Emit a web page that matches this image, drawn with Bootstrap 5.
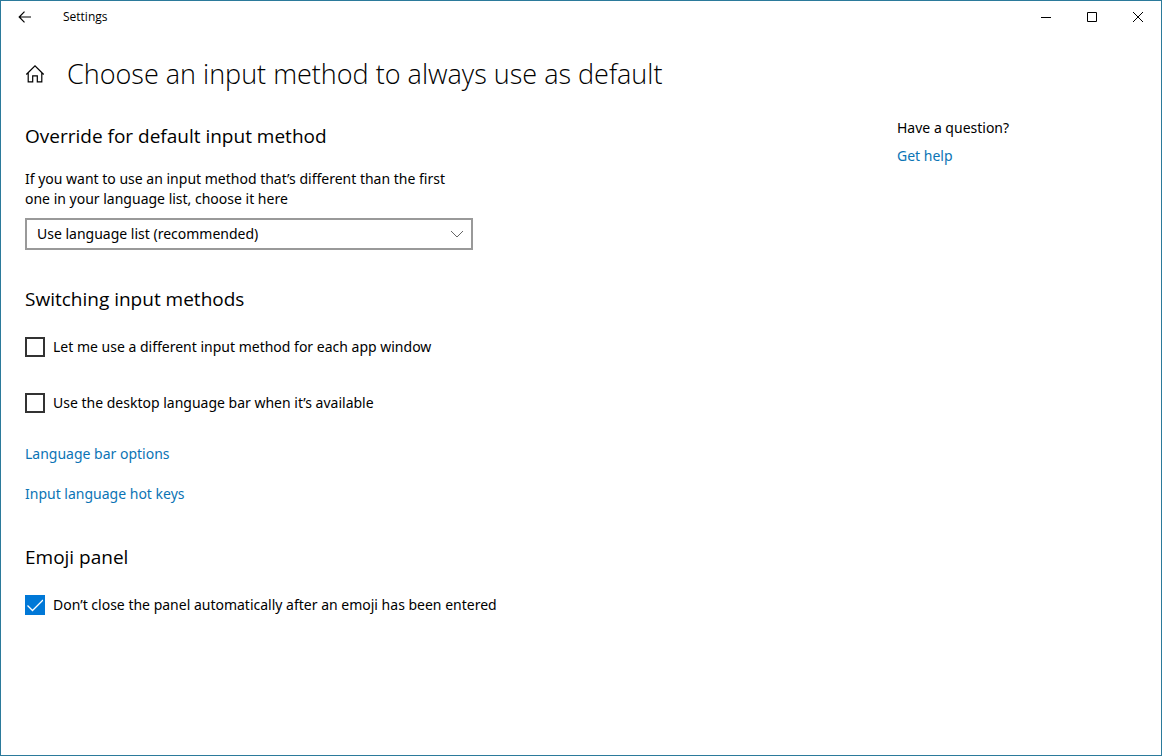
<!DOCTYPE html>
<html lang="en">
<head>
<meta charset="utf-8">
<meta name="viewport" content="width=device-width, initial-scale=1">
<title>Settings</title>
<link href="https://cdn.jsdelivr.net/npm/bootstrap@5.3.0/dist/css/bootstrap.min.css" rel="stylesheet">
<style>
body{font-family:"Noto Sans","Open Sans",sans-serif;font-size:14px;line-height:20px;color:#000;background:#fff}
.app-window{border:1px solid #2b7a9b}
.title-bar{height:33px}
.window-name{font-family:"Open Sans","Noto Sans",sans-serif;font-size:12px;margin-left:14px}
.icon-btn{border:0;background:none;color:#000;padding:0;display:flex;align-items:center;justify-content:center}
.icon-btn:hover{background:#e6e6e6}
.caption-btn{width:46px;height:32px}
.back-btn{width:48px;height:32px}
.page-head{padding:20px 24px 0;gap:22px}
.page-title{font-family:"Open Sans","Noto Sans",sans-serif;font-size:27px;line-height:40px;font-weight:300}
.settings-body{padding:24px}
.settings-body a{color:#0b74b5;text-decoration:none}
.settings-body a:hover{text-decoration:underline}
.main-col{flex:0 1 872px}
.section-title{font-family:"Open Sans","Noto Sans",sans-serif;font-size:19px;line-height:28px;font-weight:400;margin:0 0 24px}
.override-section{padding-top:4px;margin-bottom:35px}
.override-section .section-title{margin-bottom:19px}
.switch-section{margin-bottom:39px}
.intro{max-width:440px;margin-bottom:9px}
.method-select{max-width:448px;height:32px;border:2px solid #999;border-radius:0;font-size:14px;line-height:20px;padding:4px 32px 4px 10px;color:#000;background-image:url("data:image/svg+xml,%3Csvg xmlns='http://www.w3.org/2000/svg' viewBox='0 0 12 12'%3E%3Cpath d='M0 3l6 6 6-6' fill='none' stroke='%23666'/%3E%3C/svg%3E");background-size:12px;background-position:right 8px center}
.check-row{gap:8px}
.check-list{gap:36px;margin-bottom:31px}
.link-list{gap:20px}
.check-row .form-check-input{width:20px;height:20px;border:2px solid #333;border-radius:0;margin:0;flex:none}
.check-row .form-check-input:checked{background-color:#0078d7;border-color:#0078d7;background-size:20px;background-image:url("data:image/svg+xml,%3Csvg xmlns='http://www.w3.org/2000/svg' viewBox='0 0 20 20'%3E%3Cpath d='M2.5 10.5l5 5L18 5' fill='none' stroke='%23fff' stroke-width='1.3'/%3E%3C/svg%3E")}
</style>
</head>
<body>
<div class="app-window min-vh-100">
  <header class="title-bar d-flex align-items-start">
    <button type="button" class="icon-btn back-btn" aria-label="Back"><svg width="14" height="12" fill="none" stroke="currentColor" stroke-width="1.2"><path d="M13 6H1.5M6.500 .7L1.200 6l5.300 5.300"/></svg></button>
    <span class="window-name align-self-end pb-1 mb-1 lh-base">Settings</span>
    <div class="d-flex ms-auto">
      <button type="button" class="icon-btn caption-btn" aria-label="Minimize"><svg width="10" height="11" fill="none" stroke="currentColor"><path d="M0 5.500h10"/></svg></button>
      <button type="button" class="icon-btn caption-btn" aria-label="Maximize"><svg width="10" height="10" fill="none" stroke="currentColor"><path d="M.5.5h9v9h-9z"/></svg></button>
      <button type="button" class="icon-btn caption-btn" aria-label="Close"><svg width="10" height="10" fill="none" stroke="currentColor"><path d="M0 0l10 10M10 0L0 10"/></svg></button>
    </div>
  </header>

  <div class="page-head d-flex align-items-center">
    <button type="button" class="icon-btn" aria-label="Home"><svg width="20" height="20" viewBox="0 0 20 20" fill="none" stroke="currentColor" stroke-width="1.2"><path d="M1.300 10.500L10 1.800l8.700 8.700M3.200 8.800v9h4.500v-6h4.600v6h4.500v-9"/></svg></button>
    <h1 class="page-title mb-0">Choose an input method to always use as default</h1>
  </div>

  <div class="settings-body d-flex flex-wrap flex-md-nowrap">
    <main class="main-col">
      <section class="override-section">
        <h2 class="section-title">Override for default input method</h2>
        <label class="intro d-block" for="method">If you want to use an input method that’s different than the first one in your language list, choose it here</label>
        <select class="form-select method-select" id="method"><option>Use language list (recommended)</option></select>
      </section>

      <section class="switch-section">
        <h2 class="section-title">Switching input methods</h2>
        <div class="check-list d-flex flex-column">
          <div class="check-row d-flex"><input class="form-check-input" type="checkbox" id="perApp"><label for="perApp">Let me use a different input method for each app window</label></div>
          <div class="check-row d-flex"><input class="form-check-input" type="checkbox" id="langBar"><label for="langBar">Use the desktop language bar when it’s available</label></div>
        </div>
        <div class="link-list d-flex flex-column align-items-start">
          <a href="#">Language bar options</a>
          <a href="#">Input language hot keys</a>
        </div>
      </section>

      <section>
        <h2 class="section-title">Emoji panel</h2>
        <div class="check-row d-flex"><input class="form-check-input" type="checkbox" id="emoji" checked><label for="emoji">Don’t close the panel automatically after an emoji has been entered</label></div>
      </section>
    </main>

    <aside class="d-flex flex-column align-items-start gap-2">
      <span>Have a question?</span>
      <a href="#">Get help</a>
    </aside>
  </div>
</div>
<script src="https://cdn.jsdelivr.net/npm/bootstrap@5.3.0/dist/js/bootstrap.bundle.min.js"></script>
</body>
</html>
